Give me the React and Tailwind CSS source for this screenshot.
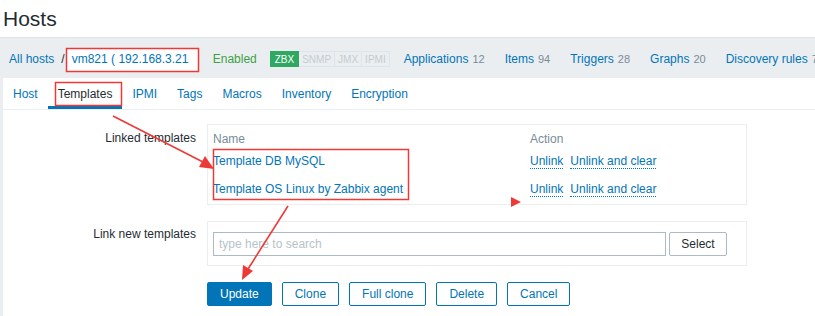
const LINK = "text-[#0275b8]";

function Badge({ children, on }) {
  return (
    <span
      className={
        on
          ? "h-[16px] px-[4px] flex items-center bg-[#2fa862] border border-[#2fa862] text-white text-[10px]"
          : "h-[16px] px-[3px] flex items-center border border-[#dfe4e7] border-l-0 text-[#c4ccd1] text-[10px]"
      }
    >
      {children}
    </span>
  );
}

function NavLink({ label, count }) {
  return (
    <span className="flex items-baseline shrink-0">
      <span className={LINK}>{label}</span>
      <span className="ml-[4px] text-[11px] text-[#768d99]">{count}</span>
    </span>
  );
}

function OutlineButton({ children }) {
  return (
    <button className="h-[24px] px-[12px] border border-[#0275b8] rounded-[2px] bg-white text-[#0275b8] text-[12px]">
      {children}
    </button>
  );
}

function Annotations() {
  return (
    <svg className="absolute inset-0 pointer-events-none" width="815" height="316" viewBox="0 0 815 316">
      <g fill="none" stroke="#ee3a36" strokeWidth="1.5">
        <rect x="66.5" y="48.5" width="132" height="23" />
        <rect x="55.5" y="82.5" width="66" height="23" />
        <rect x="213.5" y="149.5" width="195" height="50" />
      </g>
      <line x1="113" y1="116" x2="203" y2="162" stroke="#ee3a36" strokeWidth="1.6" />
      <polygon points="214,169 199,167 205,156" fill="#ee3a36" />
      <line x1="288" y1="206" x2="248" y2="269" stroke="#ee3a36" strokeWidth="1.6" />
      <polygon points="242,280 243,265 253,271" fill="#ee3a36" />
      <polygon points="511,197 521,202 511,207" fill="#ee3a36" />
    </svg>
  );
}

export default function App() {
  return (
    <div
      className="relative w-[815px] h-[316px] overflow-hidden bg-white text-[12px] text-[#1f2c33]"
      style={{ fontFamily: '"Liberation Sans", Arial, sans-serif' }}
    >
      {/* title */}
      <div className="h-[37px] flex items-center pl-[3px]">
        <h1 className="text-[21px] leading-none text-[#1f2c33]">Hosts</h1>
      </div>

      <div className="bg-[#ebeef0] border-t border-[#dfe4e7]">
        {/* breadcrumbs + counters */}
        <div className="h-[40px] flex items-center pl-[9px] pt-[2px] whitespace-nowrap">
          <span className={"shrink-0 " + LINK}>All hosts</span>
          <span className="shrink-0 ml-[7px] text-[#1f2c33]">/</span>
          <span className="shrink-0 ml-[1px] w-[132px] h-[23px] px-[6px] flex items-center bg-white overflow-hidden">
            <span className={LINK}>vm821 ( 192.168.3.21</span>
          </span>
          <span className="shrink-0 ml-[15px] text-[#429e47]">Enabled</span>
          <span className="shrink-0 ml-[13px] flex">
            <Badge on>ZBX</Badge>
            <Badge>SNMP</Badge>
            <Badge>JMX</Badge>
            <Badge>IPMI</Badge>
          </span>
          <span className="shrink-0 ml-[14px] flex gap-[20px]">
            <NavLink label="Applications" count="12" />
            <NavLink label="Items" count="94" />
            <NavLink label="Triggers" count="28" />
            <NavLink label="Graphs" count="20" />
            <NavLink label="Discovery rules" count="7" />
          </span>
        </div>

        <div className="flex">
          <div className="w-[3px] shrink-0" />
          <div className="flex-1 bg-white h-[238px]">
            {/* tabs */}
            <div className="h-[32px] flex border-b border-[#ebeef0]">
              {["Host", "Templates", "IPMI", "Tags", "Macros", "Inventory", "Encryption"].map((t) => (
                <div
                  key={t}
                  className={
                    t === "Templates"
                      ? "px-[10px] flex items-center text-[#1f2c33] border-b-[3px] border-[#0275b8] pt-[4px]"
                      : "px-[10px] flex items-center pt-[1px] " + LINK
                  }
                >
                  {t}
                </div>
              ))}
            </div>

            {/* form */}
            <div className="pt-[14px]">
              <div className="flex">
                <div className="w-[193px] text-right pt-[5px]">Linked templates</div>
                <div className="ml-[11px] w-[540px] border border-[#ebeef0] pt-[3px] pb-[4px] px-[5px]">
                  <div className="h-[22px] flex items-center text-[#768d99]">
                    <span className="w-[317px]">Name</span>
                    <span>Action</span>
                  </div>
                  {["Template DB MySQL", "Template OS Linux by Zabbix agent"].map((name, i) => (
                    <div key={name} className={i === 0 ? "h-[22px] flex items-center" : "h-[28px] pt-[6px] flex items-center"}>
                      <span className={"w-[317px] " + LINK}>{name}</span>
                      <span className={"border-b border-dotted border-[#0275b8] leading-[14px] " + LINK}>Unlink</span>
                      <span className={"ml-[7px] border-b border-dotted border-[#0275b8] leading-[14px] " + LINK}>
                        Unlink and clear
                      </span>
                    </div>
                  ))}
                </div>
              </div>

              <div className="flex mt-[16px]">
                <div className="w-[193px] text-right pt-[4px]">Link new templates</div>
                <div className="ml-[11px] w-[540px] border border-[#ebeef0] pt-[10px] pb-[9px] pl-[5px] flex gap-[3px]">
                  <div className="w-[453px] h-[24px] border border-[#acbbc2] flex items-center px-[5px] text-[#b7c3c9]">
                    type here to search
                  </div>
                  <button className="w-[58px] h-[24px] border border-[#acbbc2] rounded-[2px] bg-white text-[#1f2c33] text-[12px]">
                    Select
                  </button>
                </div>
              </div>

              <div className="flex gap-[10px] mt-[16px] ml-[204px]">
                <button className="h-[24px] px-[12px] bg-[#0275b8] border border-[#0275b8] rounded-[2px] text-white text-[12px]">
                  Update
                </button>
                <OutlineButton>Clone</OutlineButton>
                <OutlineButton>Full clone</OutlineButton>
                <OutlineButton>Delete</OutlineButton>
                <OutlineButton>Cancel</OutlineButton>
              </div>
            </div>
          </div>
        </div>
      </div>

      <Annotations />
    </div>
  );
}
